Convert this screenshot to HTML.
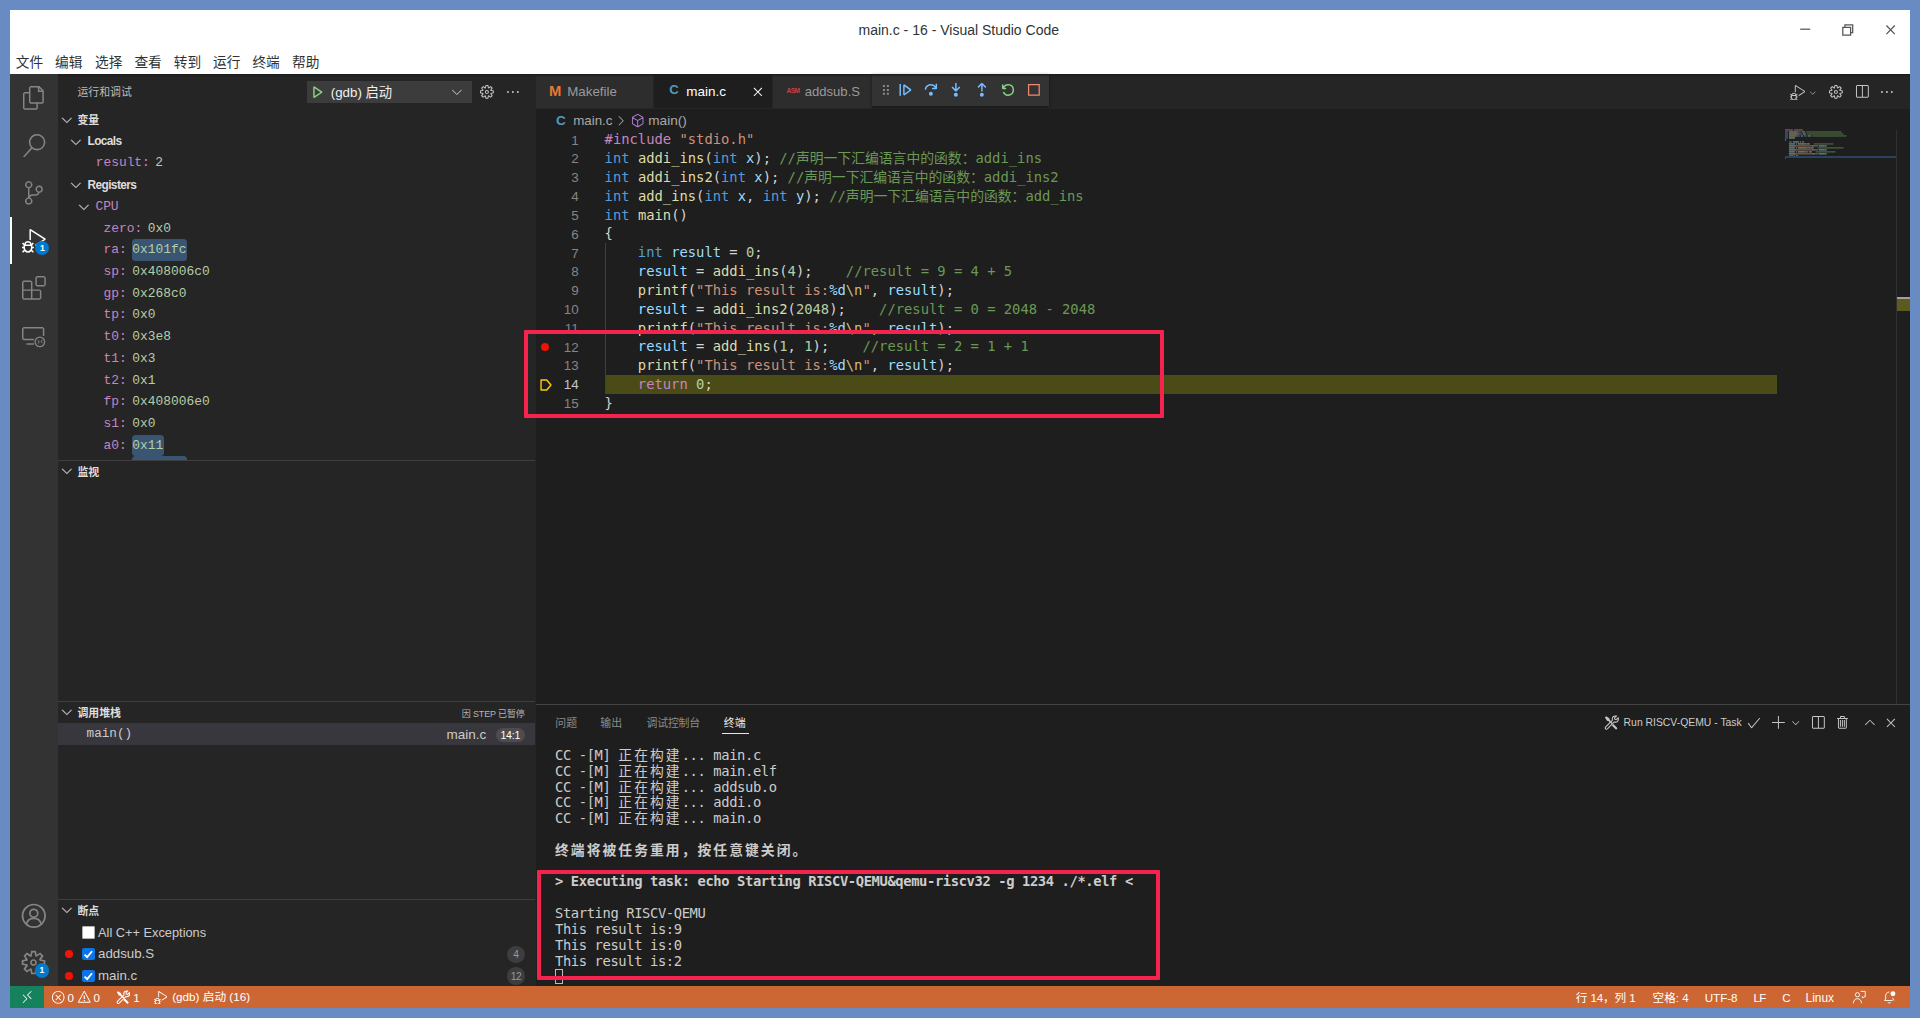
<!DOCTYPE html>
<html lang="zh-CN">
<head>
<meta charset="utf-8">
<title>main.c - 16 - Visual Studio Code</title>
<style>
html,body{margin:0;padding:0;}
body{width:1920px;height:1018px;overflow:hidden;background:#698bc4;position:relative;font-family:"Liberation Sans","Noto Sans CJK SC",sans-serif;-webkit-font-smoothing:antialiased;}
#app{position:absolute;left:0;top:0;width:1920px;height:1018px;overflow:hidden;}
#app div,#app span.t,#app svg.i{position:absolute;}
#app div.clip{overflow:hidden;}
span.t{white-space:pre;display:block;}
span.code{font-family:"DejaVu Sans Mono","Liberation Mono","Noto Sans CJK SC",monospace;font-size:13.82px;line-height:18.82px;height:18.82px;color:#d4d4d4;letter-spacing:-0.000px;}
span.code span{letter-spacing:inherit;}
span.term{font-family:"DejaVu Sans Mono","Liberation Mono","Noto Sans CJK SC",monospace;font-size:13.8px;line-height:15.81px;height:15.81px;color:#cccccc;letter-spacing:-0.391px;}
span.term .w{letter-spacing:2.034px;}
</style>
</head>
<body>
<div id="app">
<!-- title bar -->
<div style="left:10px;top:10px;width:1900px;height:998px;background:#252526;"></div>
<div style="left:10px;top:10px;width:1900px;height:64.2px;background:#ffffff;"></div>
<span class="t" style="top:20px;line-height:21px;height:21px;font-size:14px;color:#2e3436;left:858.5px;">main.c - 16 - Visual Studio Code</span>
<svg class="i" style="left:1795px;top:18px" width="110" height="24" viewBox="0 0 110 24" fill="none" stroke="#555555" stroke-width="1.25"><path d="M5.2 11.2H15.2"/><path d="M47.8 9.3h7.8v7.800h-7.800z"/><path d="M49.900 9.200V6.900h7.800v7.800h-2.200"/><path d="M91.4 7.5l8.4 8.6M99.800 7.500l-8.400 8.600"/></svg>
<span class="t" style="top:52px;line-height:21px;height:21px;font-size:13.7px;color:#2e3436;left:15.7px;">文件</span>
<span class="t" style="top:52px;line-height:21px;height:21px;font-size:13.7px;color:#2e3436;left:55px;">编辑</span>
<span class="t" style="top:52px;line-height:21px;height:21px;font-size:13.7px;color:#2e3436;left:95px;">选择</span>
<span class="t" style="top:52px;line-height:21px;height:21px;font-size:13.7px;color:#2e3436;left:134.4px;">查看</span>
<span class="t" style="top:52px;line-height:21px;height:21px;font-size:13.7px;color:#2e3436;left:173.7px;">转到</span>
<span class="t" style="top:52px;line-height:21px;height:21px;font-size:13.7px;color:#2e3436;left:213px;">运行</span>
<span class="t" style="top:52px;line-height:21px;height:21px;font-size:13.7px;color:#2e3436;left:252.4px;">终端</span>
<span class="t" style="top:52px;line-height:21px;height:21px;font-size:13.7px;color:#2e3436;left:292px;">帮助</span>
<!-- activity bar -->
<div style="left:10px;top:74.2px;width:47.6px;height:911.8px;background:#333333;"></div>
<svg class="i" style="left:21.9px;top:86.07px;" width="23.8" height="23.8" viewBox="0 0 24 24" fill="#858585"><path d="M17.5 0h-9L7 1.5V6H2.5L1 7.5v15.07L2.5 24h12.07L16 22.57V18h4.7l1.3-1.43V4.5L17.5 0zm0 2.12l2.38 2.38H17.5V2.12zm-3 20.38h-12v-15H7v9.07L8.5 18h6v4.5zm6-6h-12v-15H16V6h4.5v10.5z"/></svg>
<svg class="i" style="left:21.9px;top:133.62px;" width="23.8" height="23.8" viewBox="0 0 24 24" fill="#858585"><path d="M15.25 0a8.25 8.25 0 0 0-6.18 13.72L1 22.88l1.12 1 8.05-9.12A8.251 8.251 0 1 0 15.25.01V0zm0 15a6.75 6.75 0 1 1 0-13.5 6.75 6.75 0 0 1 0 13.5z"/></svg>
<svg class="i" style="left:21.9px;top:181.17px;" width="23.8" height="23.8" viewBox="0 0 24 24" fill="#858585"><path d="M21.007 8.222A3.738 3.738 0 0 0 15.045 5.2a3.737 3.737 0 0 0 1.156 6.583 2.988 2.988 0 0 1-2.668 1.67h-2.99a4.456 4.456 0 0 0-2.989 1.165V7.4a3.737 3.737 0 1 0-1.494 0v9.117a3.776 3.776 0 1 0 1.816.099 2.990 2.990 0 0 1 2.668-1.667h2.990a4.484 4.484 0 0 0 4.223-3.039 3.736 3.736 0 0 0 3.250-3.687zM4.565 3.738a2.242 2.242 0 1 1 4.484 0 2.242 2.242 0 0 1-4.484 0zm4.484 16.441a2.242 2.242 0 1 1-4.484 0 2.242 2.242 0 0 1 4.484 0zm8.221-9.715a2.242 2.242 0 1 1 0-4.485 2.242 2.242 0 0 1 0 4.485z"/></svg>
<svg class="i" style="left:21.9px;top:228.72px;" width="23.8" height="23.8" viewBox="0 0 24 24" fill="#ffffff"><path d="M10.94 13.5l-1.32 1.32a3.730 3.730 0 0 0-7.240 0L1.060 13.500 0 14.560l1.720 1.720-.220.220V18H0v1.500h1.500v.080c.077.489.214.966.410 1.420L0 22.940 1.060 24l1.650-1.650A4.308 4.308 0 0 0 6 24a4.310 4.310 0 0 0 3.290-1.650L10.940 24 12 22.940 10.090 21c.198-.464.336-.951.410-1.450v-.100H12V18h-1.500v-1.500l-.220-.220L12 14.560l-1.060-1.060zM6 13.500a2.250 2.250 0 0 1 2.250 2.250h-4.500A2.250 2.250 0 0 1 6 13.500zm3 6a3.330 3.330 0 0 1-3 3 3.330 3.330 0 0 1-3-3v-2.250h6v2.250zm14.760-9.900v1.260L13.500 17.370V15.600l8.500-5.370L9 2v9.460a5.070 5.070 0 0 0-1.500-.720V.630L8.640 0l15.120 9.600z"/></svg>
<svg class="i" style="left:21.9px;top:276.28px;" width="23.8" height="23.8" viewBox="0 0 24 24" fill="#858585"><path d="M13.5 1.5L15 0h7.5L24 1.5V9l-1.5 1.5H15L13.500 9V1.500zm1.500 0V9h7.500V1.500H15zM0 15V6l1.500-1.500H9L10.500 6v7.500H18l1.500 1.500v7.500L18 24H1.500L0 22.500V15zm9-1.500V6H1.500v7.500H9zM9 15H1.500v7.500H9V15zm1.500 7.500H18V15h-7.500v7.500z"/></svg>
<svg class="i" style="left:21.9px;top:323.82px;" width="23.8" height="23.8" viewBox="0 0 24 24" fill="#858585"><path fill-rule="evenodd" d="M1.5 3H21l1.5 1.500V12H21V4.500H1.500V15H12v1.500H1.500L0 15V4.500L1.500 3zM4.500 19.500H12V21H4.500v-1.500zM18 12.500a5.500 5.500 0 1 0 0 11 5.500 5.500 0 0 0 0-11zm0 9.700a4.200 4.200 0 1 1 0-8.400 4.200 4.200 0 0 1 0 8.400z"/><path d="M16.300 16.200l1.600 1.800-1.600 1.800-.600-.500 1.150-1.300-1.150-1.300zM20.300 15.700l-1.600 1.800 1.600 1.800.600-.500-1.150-1.300 1.150-1.300z"/></svg>
<div style="left:10px;top:216.85px;width:2px;height:47.55px;background:#ffffff;"></div>
<div style="left:35px;top:241px;width:14.4px;height:14.4px;background:#007acc;border-radius:50%;"></div>
<span class="t" style="top:242px;line-height:13px;height:13px;font-size:8.6px;color:#ffffff;left:39.9px;font-weight:700;">1</span>
<svg class="i" style="left:21px;top:902.6px;" width="25.6" height="25.6" viewBox="0 0 24 24" fill="#858585"><circle cx="12" cy="12" r="10.6" fill="none" stroke="#858585" stroke-width="1.6"/><circle cx="12" cy="9.6" r="3.700" fill="none" stroke="#858585" stroke-width="1.600"/><path d="M5.200 19.600c.700-3.300 3.300-5.200 6.800-5.200s6.100 1.900 6.800 5.200" fill="none" stroke="#858585" stroke-width="1.600"/></svg>
<svg class="i" style="left:20.3px;top:949.3px;" width="27" height="27" viewBox="0 0 16 16" fill="#858585"><path d="M9.1 4.4L8.6 2H7.4l-.5 2.4-.7.3-2-1.3-.9.8 1.3 2-.2.7-2.4.5v1.2l2.4.5.3.8-1.3 2 .8.8 2-1.3.8.3.4 2.3h1.2l.5-2.4.8-.3 2 1.3.8-.8-1.3-2 .3-.8 2.3-.4V7.4l-2.4-.5-.3-.8 1.3-2-.8-.8-2 1.3-.7-.2zM9.4 1l.5 2.4L12 2.1l2 2-1.4 2.1 2.4.4v2.8l-2.4.5L14 12l-2 2-2.1-1.4-.5 2.4H6.6l-.5-2.4L4 13.9l-2-2 1.4-2.1L1 9.4V6.6l2.4-.5L2.1 4l2-2 2.1 1.4.4-2.4h2.8zm.6 7c0 1.1-.9 2-2 2s-2-.9-2-2 .9-2 2-2 2 .9 2 2zM8 9c.6 0 1-.4 1-1s-.4-1-1-1-1 .4-1 1 .4 1 1 1z"/></svg>
<div style="left:34.5px;top:963.2px;width:14.4px;height:14.4px;background:#007acc;border-radius:50%;"></div>
<span class="t" style="top:964px;line-height:13px;height:13px;font-size:8.6px;color:#ffffff;left:39.4px;font-weight:700;">1</span>
<!-- side bar -->
<div style="left:57.6px;top:74.2px;width:477.9px;height:911.8px;background:#252526;"></div>
<span class="t" style="top:84px;line-height:16px;height:16px;font-size:10.9px;color:#bbbbbb;left:77.4px;">运行和调试</span>
<div style="left:307px;top:81.3px;width:165px;height:21.4px;background:#3c3c3c;"></div>
<svg class="i" style="left:308.7px;top:84.2px;" width="15.8" height="15.8" viewBox="0 0 16 16" fill="#89d185"><path d="M4.25 3l1.166-.624 8 5.333v1.248l-8 5.334-1.166-.624V3zm1.5 1.401v7.864l5.898-3.932L5.750 4.401z"/></svg>
<span class="t" style="top:83px;line-height:20px;height:20px;font-size:13.3px;color:#f0f0f0;left:330.8px;">(gdb) 启动</span>
<svg class="i" style="left:449.3px;top:84.4px;" width="15.8" height="15.8" viewBox="0 0 16 16" fill="#c5c5c5"><path d="M7.976 10.072l4.357-4.357.62.618L8.284 11h-.618L3 6.333l.619-.618 4.357 4.357z"/></svg>
<svg class="i" style="left:478.9px;top:84.1px;" width="15.8" height="15.8" viewBox="0 0 16 16" fill="#c5c5c5"><path d="M9.1 4.4L8.6 2H7.4l-.5 2.4-.7.3-2-1.3-.9.8 1.3 2-.2.7-2.4.5v1.2l2.4.5.3.8-1.3 2 .8.8 2-1.3.8.3.4 2.3h1.2l.5-2.4.8-.3 2 1.3.8-.8-1.3-2 .3-.8 2.3-.4V7.4l-2.4-.5-.3-.8 1.3-2-.8-.8-2 1.3-.7-.2zM9.4 1l.5 2.4L12 2.1l2 2-1.4 2.1 2.4.4v2.8l-2.4.5L14 12l-2 2-2.1-1.4-.5 2.4H6.6l-.5-2.4L4 13.9l-2-2 1.4-2.1L1 9.4V6.6l2.4-.5L2.1 4l2-2 2.1 1.4.4-2.4h2.8zm.6 7c0 1.1-.9 2-2 2s-2-.9-2-2 .9-2 2-2 2 .9 2 2zM8 9c.6 0 1-.4 1-1s-.4-1-1-1-1 .4-1 1 .4 1 1 1z"/></svg>
<svg class="i" style="left:504.9px;top:84.1px;" width="15.8" height="15.8" viewBox="0 0 16 16" fill="#c5c5c5"><path d="M4 8a1 1 0 1 1-2 0 1 1 0 0 1 2 0zm5 0a1 1 0 1 1-2 0 1 1 0 0 1 2 0zm5 0a1 1 0 1 1-2 0 1 1 0 0 1 2 0z"/></svg>
<div style="left:57.6px;top:74.2px;width:477.9px;height:3px;background:linear-gradient(#1b1b1c,#25252600);"></div>
<svg class="i" style="left:59.4px;top:111.98px;stroke:#c5c5c5;stroke-width:0.35px;" width="15.8" height="15.8" viewBox="0 0 16 16" fill="#c5c5c5"><path d="M7.976 10.072l4.357-4.357.62.618L8.284 11h-.618L3 6.333l.619-.618 4.357 4.357z"/></svg>
<span class="t" style="top:112px;line-height:16px;height:16px;font-size:10.9px;color:#dddddd;left:77.4px;font-weight:700;">变量</span>
<div class="clip" style="left:0;top:0;width:535.5px;height:460.2px"><svg class="i" style="left:68.4px;top:133.5px;stroke:#c5c5c5;stroke-width:0.35px;" width="15.8" height="15.8" viewBox="0 0 16 16" fill="#c5c5c5"><path d="M7.976 10.072l4.357-4.357.62.618L8.284 11h-.618L3 6.333l.619-.618 4.357 4.357z"/></svg>
<span class="t" style="top:132px;line-height:18px;height:18px;font-size:11.9px;color:#dddddd;left:87.5px;font-weight:700;letter-spacing:-0.6px;">Locals</span>
<span class="t" style="top:153px;line-height:19px;height:19px;font-size:12.9px;color:#b5cea8;left:95.7px;font-family:'Liberation Mono','Noto Sans CJK SC',monospace;"><span style="color:#c586c0">result:</span><span style="color:#b5cea8;margin-left:5.5px">2</span></span>
<svg class="i" style="left:68.4px;top:176.92px;stroke:#c5c5c5;stroke-width:0.35px;" width="15.8" height="15.8" viewBox="0 0 16 16" fill="#c5c5c5"><path d="M7.976 10.072l4.357-4.357.62.618L8.284 11h-.618L3 6.333l.619-.618 4.357 4.357z"/></svg>
<span class="t" style="top:176px;line-height:18px;height:18px;font-size:11.9px;color:#dddddd;left:87.5px;font-weight:700;letter-spacing:-0.6px;">Registers</span>
<svg class="i" style="left:76.3px;top:198.63px;stroke:#c5c5c5;stroke-width:0.35px;" width="15.8" height="15.8" viewBox="0 0 16 16" fill="#c5c5c5"><path d="M7.976 10.072l4.357-4.357.62.618L8.284 11h-.618L3 6.333l.619-.618 4.357 4.357z"/></svg>
<span class="t" style="top:197px;line-height:19px;height:19px;font-size:12.9px;color:#c586c0;left:95.4px;font-family:'Liberation Mono','Noto Sans CJK SC',monospace;">CPU</span>
<span class="t" style="top:219px;line-height:19px;height:19px;font-size:12.9px;color:#b5cea8;left:103.6px;font-family:'Liberation Mono','Noto Sans CJK SC',monospace;"><span style="color:#c586c0">zero:</span><span style="color:#b5cea8;margin-left:5.5px">0x0</span></span>
<div style="left:131.82px;top:239.37px;width:55.19px;height:21.47px;background:#3a5572;border-radius:3.5px;"></div>
<span class="t" style="top:240px;line-height:19px;height:19px;font-size:12.9px;color:#b5cea8;left:103.6px;font-family:'Liberation Mono','Noto Sans CJK SC',monospace;"><span style="color:#c586c0">ra:</span><span style="color:#b5cea8;margin-left:5.5px">0x101fc</span></span>
<span class="t" style="top:262px;line-height:19px;height:19px;font-size:12.9px;color:#b5cea8;left:103.6px;font-family:'Liberation Mono','Noto Sans CJK SC',monospace;"><span style="color:#c586c0">sp:</span><span style="color:#b5cea8;margin-left:5.5px">0x408006c0</span></span>
<span class="t" style="top:284px;line-height:19px;height:19px;font-size:12.9px;color:#b5cea8;left:103.6px;font-family:'Liberation Mono','Noto Sans CJK SC',monospace;"><span style="color:#c586c0">gp:</span><span style="color:#b5cea8;margin-left:5.5px">0x268c0</span></span>
<span class="t" style="top:305px;line-height:19px;height:19px;font-size:12.9px;color:#b5cea8;left:103.6px;font-family:'Liberation Mono','Noto Sans CJK SC',monospace;"><span style="color:#c586c0">tp:</span><span style="color:#b5cea8;margin-left:5.5px">0x0</span></span>
<span class="t" style="top:327px;line-height:19px;height:19px;font-size:12.9px;color:#b5cea8;left:103.6px;font-family:'Liberation Mono','Noto Sans CJK SC',monospace;"><span style="color:#c586c0">t0:</span><span style="color:#b5cea8;margin-left:5.5px">0x3e8</span></span>
<span class="t" style="top:349px;line-height:19px;height:19px;font-size:12.9px;color:#b5cea8;left:103.6px;font-family:'Liberation Mono','Noto Sans CJK SC',monospace;"><span style="color:#c586c0">t1:</span><span style="color:#b5cea8;margin-left:5.5px">0x3</span></span>
<span class="t" style="top:371px;line-height:19px;height:19px;font-size:12.9px;color:#b5cea8;left:103.6px;font-family:'Liberation Mono','Noto Sans CJK SC',monospace;"><span style="color:#c586c0">t2:</span><span style="color:#b5cea8;margin-left:5.5px">0x1</span></span>
<span class="t" style="top:392px;line-height:19px;height:19px;font-size:12.9px;color:#b5cea8;left:103.6px;font-family:'Liberation Mono','Noto Sans CJK SC',monospace;"><span style="color:#c586c0">fp:</span><span style="color:#b5cea8;margin-left:5.5px">0x408006e0</span></span>
<span class="t" style="top:414px;line-height:19px;height:19px;font-size:12.9px;color:#b5cea8;left:103.6px;font-family:'Liberation Mono','Noto Sans CJK SC',monospace;"><span style="color:#c586c0">s1:</span><span style="color:#b5cea8;margin-left:5.5px">0x0</span></span>
<div style="left:131.82px;top:434.76px;width:31.97px;height:21.47px;background:#3a5572;border-radius:3.5px;"></div>
<span class="t" style="top:436px;line-height:19px;height:19px;font-size:12.9px;color:#b5cea8;left:103.6px;font-family:'Liberation Mono','Noto Sans CJK SC',monospace;"><span style="color:#c586c0">a0:</span><span style="color:#b5cea8;margin-left:5.5px">0x11</span></span>
<div style="left:131.82px;top:456.47px;width:55.19px;height:21.47px;background:#3a5572;border-radius:3.5px;"></div>
<span class="t" style="top:457px;line-height:19px;height:19px;font-size:12.9px;color:#b5cea8;left:103.6px;font-family:'Liberation Mono','Noto Sans CJK SC',monospace;"><span style="color:#c586c0">a1:</span><span style="color:#b5cea8;margin-left:5.5px">0x11a10</span></span></div>
<div style="left:57.6px;top:460.2px;width:477.9px;height:1px;background:#3f3f41;"></div>
<svg class="i" style="left:59.4px;top:463.49px;stroke:#c5c5c5;stroke-width:0.35px;" width="15.8" height="15.8" viewBox="0 0 16 16" fill="#c5c5c5"><path d="M7.976 10.072l4.357-4.357.62.618L8.284 11h-.618L3 6.333l.619-.618 4.357 4.357z"/></svg>
<span class="t" style="top:464px;line-height:16px;height:16px;font-size:10.9px;color:#dddddd;left:77.4px;font-weight:700;">监视</span>
<div style="left:57.6px;top:701px;width:477.9px;height:1px;background:#3f3f41;"></div>
<svg class="i" style="left:59.4px;top:704.28px;stroke:#c5c5c5;stroke-width:0.35px;" width="15.8" height="15.8" viewBox="0 0 16 16" fill="#c5c5c5"><path d="M7.976 10.072l4.357-4.357.62.618L8.284 11h-.618L3 6.333l.619-.618 4.357 4.357z"/></svg>
<span class="t" style="top:705px;line-height:16px;height:16px;font-size:10.9px;color:#dddddd;left:77.4px;font-weight:700;">调用堆栈</span>
<span class="t" style="top:707px;line-height:14px;height:14px;font-size:9px;color:#b4b4b4;right:1395.4px;letter-spacing:-0.15px;">因 STEP 已暂停</span>
<div style="left:57.6px;top:723.2px;width:477.9px;height:21.7px;background:#37373d;"></div>
<span class="t" style="top:724px;line-height:19px;height:19px;font-size:12.65px;color:#cccccc;left:86.6px;font-family:'Liberation Mono','Noto Sans CJK SC',monospace;">main()</span>
<span class="t" style="top:725px;line-height:20px;height:20px;font-size:13.5px;color:#cccccc;right:1433.8px;">main.c</span>
<div style="left:495.5px;top:727.6px;width:29.7px;height:14.6px;background:#4d4d4d;border-radius:7.3px;"></div>
<span class="t" style="top:727px;line-height:16px;height:16px;font-size:10.6px;color:#ffffff;left:510.3px;letter-spacing:-0.2px;transform:translateX(-50%);">14:1</span>
<div style="left:57.6px;top:899px;width:477.9px;height:1px;background:#3f3f41;"></div>
<svg class="i" style="left:59.4px;top:902.28px;stroke:#c5c5c5;stroke-width:0.35px;" width="15.8" height="15.8" viewBox="0 0 16 16" fill="#c5c5c5"><path d="M7.976 10.072l4.357-4.357.62.618L8.284 11h-.618L3 6.333l.619-.618 4.357 4.357z"/></svg>
<span class="t" style="top:903px;line-height:16px;height:16px;font-size:10.9px;color:#dddddd;left:77.4px;font-weight:700;">断点</span>
<div style="left:82.2px;top:925.99px;width:12.7px;height:12.7px;background:#ffffff;border-radius:2px;box-shadow:inset 0 0 0 0.8px #9a9a9a;"></div>
<span class="t" style="top:923px;line-height:19px;height:19px;font-size:12.8px;color:#cccccc;left:98px;">All C++ Exceptions</span>
<div style="left:65px;top:950.36px;width:7.6px;height:7.6px;background:#f01408;border-radius:50%;"></div>
<div style="left:82.2px;top:947.75px;width:12.7px;height:12.7px;background:#0a74e8;border-radius:2px;"></div><svg class="i" style="left:82.2px;top:947.75px" width="12.7" height="12.7" viewBox="0 0 13 13" fill="none" stroke="#fff" stroke-width="1.9"><path d="M2.600 6.700l2.700 2.700 5-6.100"/></svg>
<span class="t" style="top:944px;line-height:20px;height:20px;font-size:13.3px;color:#cccccc;left:98px;">addsub.S</span>
<div style="left:507.4px;top:945.55px;width:17.2px;height:17.2px;background:#3d3d3f;border-radius:50%;"></div>
<span class="t" style="top:947px;line-height:15px;height:15px;font-size:10.2px;color:#9a9a9a;left:516px;letter-spacing:-0.3px;transform:translateX(-50%);">4</span>
<div style="left:65px;top:972.12px;width:7.6px;height:7.6px;background:#f01408;border-radius:50%;"></div>
<div style="left:82.2px;top:969.52px;width:12.7px;height:12.7px;background:#0a74e8;border-radius:2px;"></div><svg class="i" style="left:82.2px;top:969.52px" width="12.7" height="12.7" viewBox="0 0 13 13" fill="none" stroke="#fff" stroke-width="1.9"><path d="M2.600 6.700l2.700 2.700 5-6.100"/></svg>
<span class="t" style="top:966px;line-height:20px;height:20px;font-size:13.3px;color:#cccccc;left:98px;">main.c</span>
<div style="left:507.4px;top:967.32px;width:17.2px;height:17.2px;background:#3d3d3f;border-radius:50%;"></div>
<span class="t" style="top:969px;line-height:15px;height:15px;font-size:10.2px;color:#9a9a9a;left:516px;letter-spacing:-0.3px;transform:translateX(-50%);">12</span>
<!-- editor -->
<div style="left:535.5px;top:108.5px;width:1374.5px;height:596px;background:#1e1e1e;"></div>
<div style="left:604.6px;top:374.96px;width:1172.9px;height:18.82px;background:#4b4b18;"></div>
<div style="left:605.3px;top:243.22px;width:1px;height:150.56px;background:#404040;"></div>
<span class="t" style="top:131px;line-height:19px;height:19px;font-size:13.4px;color:#858585;right:1341.4px;">1</span>
<span class="t code" style="left:604.6px;top:130.3px"><span style="color:#c586c0">#include</span> <span style="color:#ce9178">"stdio.h"</span></span>
<span class="t" style="top:149px;line-height:19px;height:19px;font-size:13.4px;color:#858585;right:1341.4px;">2</span>
<span class="t code" style="left:604.6px;top:149.12px"><span style="color:#569cd6">int</span> <span style="color:#dcdcaa">addi_ins</span>(<span style="color:#569cd6">int</span> <span style="color:#9cdcfe">x</span>); <span style="color:#6a9955">//声明一下汇编语言中的函数：addi_ins</span></span>
<span class="t" style="top:168px;line-height:19px;height:19px;font-size:13.4px;color:#858585;right:1341.4px;">3</span>
<span class="t code" style="left:604.6px;top:167.94px"><span style="color:#569cd6">int</span> <span style="color:#dcdcaa">addi_ins2</span>(<span style="color:#569cd6">int</span> <span style="color:#9cdcfe">x</span>); <span style="color:#6a9955">//声明一下汇编语言中的函数：addi_ins2</span></span>
<span class="t" style="top:187px;line-height:19px;height:19px;font-size:13.4px;color:#858585;right:1341.4px;">4</span>
<span class="t code" style="left:604.6px;top:186.76px"><span style="color:#569cd6">int</span> <span style="color:#dcdcaa">add_ins</span>(<span style="color:#569cd6">int</span> <span style="color:#9cdcfe">x</span>, <span style="color:#569cd6">int</span> <span style="color:#9cdcfe">y</span>); <span style="color:#6a9955">//声明一下汇编语言中的函数：add_ins</span></span>
<span class="t" style="top:206px;line-height:19px;height:19px;font-size:13.4px;color:#858585;right:1341.4px;">5</span>
<span class="t code" style="left:604.6px;top:205.58px"><span style="color:#569cd6">int</span> <span style="color:#dcdcaa">main</span>()</span>
<span class="t" style="top:225px;line-height:19px;height:19px;font-size:13.4px;color:#858585;right:1341.4px;">6</span>
<span class="t code" style="left:604.6px;top:224.4px">{</span>
<span class="t" style="top:244px;line-height:19px;height:19px;font-size:13.4px;color:#858585;right:1341.4px;">7</span>
<span class="t code" style="left:604.6px;top:243.22px">    <span style="color:#569cd6">int</span> <span style="color:#9cdcfe">result</span> = <span style="color:#b5cea8">0</span>;</span>
<span class="t" style="top:262px;line-height:19px;height:19px;font-size:13.4px;color:#858585;right:1341.4px;">8</span>
<span class="t code" style="left:604.6px;top:262.04px">    <span style="color:#9cdcfe">result</span> = <span style="color:#dcdcaa">addi_ins</span>(<span style="color:#b5cea8">4</span>);    <span style="color:#6a9955">//result = 9 = 4 + 5</span></span>
<span class="t" style="top:281px;line-height:19px;height:19px;font-size:13.4px;color:#858585;right:1341.4px;">9</span>
<span class="t code" style="left:604.6px;top:280.86px">    <span style="color:#dcdcaa">printf</span>(<span style="color:#ce9178">"This result is:</span><span style="color:#9cdcfe">%d</span><span style="color:#d7ba7d">\n</span><span style="color:#ce9178">"</span>, <span style="color:#9cdcfe">result</span>);</span>
<span class="t" style="top:300px;line-height:19px;height:19px;font-size:13.4px;color:#858585;right:1341.4px;">10</span>
<span class="t code" style="left:604.6px;top:299.68px">    <span style="color:#9cdcfe">result</span> = <span style="color:#dcdcaa">addi_ins2</span>(<span style="color:#b5cea8">2048</span>);    <span style="color:#6a9955">//result = 0 = 2048 - 2048</span></span>
<span class="t" style="top:319px;line-height:19px;height:19px;font-size:13.4px;color:#858585;right:1341.4px;">11</span>
<span class="t code" style="left:604.6px;top:318.5px">    <span style="color:#dcdcaa">printf</span>(<span style="color:#ce9178">"This result is:</span><span style="color:#9cdcfe">%d</span><span style="color:#d7ba7d">\n</span><span style="color:#ce9178">"</span>, <span style="color:#9cdcfe">result</span>);</span>
<span class="t" style="top:338px;line-height:19px;height:19px;font-size:13.4px;color:#858585;right:1341.4px;">12</span>
<span class="t code" style="left:604.6px;top:337.32px">    <span style="color:#9cdcfe">result</span> = <span style="color:#dcdcaa">add_ins</span>(<span style="color:#b5cea8">1</span>, <span style="color:#b5cea8">1</span>);    <span style="color:#6a9955">//result = 2 = 1 + 1</span></span>
<span class="t" style="top:356px;line-height:19px;height:19px;font-size:13.4px;color:#858585;right:1341.4px;">13</span>
<span class="t code" style="left:604.6px;top:356.14px">    <span style="color:#dcdcaa">printf</span>(<span style="color:#ce9178">"This result is:</span><span style="color:#9cdcfe">%d</span><span style="color:#d7ba7d">\n</span><span style="color:#ce9178">"</span>, <span style="color:#9cdcfe">result</span>);</span>
<span class="t" style="top:375px;line-height:19px;height:19px;font-size:13.4px;color:#c6c6c6;right:1341.4px;">14</span>
<span class="t code" style="left:604.6px;top:374.96px">    <span style="color:#c586c0">return</span> <span style="color:#b5cea8">0</span>;</span>
<span class="t" style="top:394px;line-height:19px;height:19px;font-size:13.4px;color:#858585;right:1341.4px;">15</span>
<span class="t code" style="left:604.6px;top:393.78px">}</span>
<div style="left:541.1px;top:343.43px;width:8px;height:8px;background:#f01005;border-radius:50%;"></div>
<svg class="i" style="left:538.6px;top:377.67px" width="14" height="14" viewBox="0 0 15 15" fill="none" stroke="#ffcc00" stroke-width="1.5" stroke-linejoin="round"><path d="M2.200 2.100h6.100l4.500 5.400-4.500 5.400H2.200z"/></svg>
<svg class="i" style="left:1785px;top:129.4px;opacity:.48" width="112" height="31" viewBox="0 0 112 31"><rect x="0" y="0.25" width="7.92" height="1.5" fill="#c586c0"/><rect x="8.91" y="0.25" width="8.91" height="1.5" fill="#ce9178"/><rect x="0" y="2.24" width="2.97" height="1.5" fill="#569cd6"/><rect x="3.96" y="2.24" width="7.92" height="1.5" fill="#dcdcaa"/><rect x="11.88" y="2.24" width="0.99" height="1.5" fill="#d4d4d4"/><rect x="12.87" y="2.24" width="2.97" height="1.5" fill="#569cd6"/><rect x="16.83" y="2.24" width="0.99" height="1.5" fill="#9cdcfe"/><rect x="17.82" y="2.24" width="1.98" height="1.5" fill="#d4d4d4"/><rect x="20.79" y="2.24" width="35.64" height="1.5" fill="#6a9955"/><rect x="0" y="4.22" width="2.97" height="1.5" fill="#569cd6"/><rect x="3.96" y="4.22" width="8.91" height="1.5" fill="#dcdcaa"/><rect x="12.87" y="4.22" width="0.99" height="1.5" fill="#d4d4d4"/><rect x="13.86" y="4.22" width="2.97" height="1.5" fill="#569cd6"/><rect x="17.82" y="4.22" width="0.99" height="1.5" fill="#9cdcfe"/><rect x="18.81" y="4.22" width="1.98" height="1.5" fill="#d4d4d4"/><rect x="21.78" y="4.22" width="36.63" height="1.5" fill="#6a9955"/><rect x="0" y="6.21" width="2.97" height="1.5" fill="#569cd6"/><rect x="3.96" y="6.21" width="6.93" height="1.5" fill="#dcdcaa"/><rect x="10.89" y="6.21" width="0.99" height="1.5" fill="#d4d4d4"/><rect x="11.88" y="6.21" width="2.97" height="1.5" fill="#569cd6"/><rect x="15.84" y="6.21" width="0.99" height="1.5" fill="#9cdcfe"/><rect x="16.83" y="6.21" width="0.99" height="1.5" fill="#d4d4d4"/><rect x="18.81" y="6.21" width="2.97" height="1.5" fill="#569cd6"/><rect x="22.77" y="6.21" width="0.99" height="1.5" fill="#9cdcfe"/><rect x="23.76" y="6.21" width="1.98" height="1.5" fill="#d4d4d4"/><rect x="26.73" y="6.21" width="34.65" height="1.5" fill="#6a9955"/><rect x="0" y="8.19" width="2.97" height="1.5" fill="#569cd6"/><rect x="3.96" y="8.19" width="3.96" height="1.5" fill="#dcdcaa"/><rect x="7.92" y="8.19" width="1.98" height="1.5" fill="#d4d4d4"/><rect x="0" y="10.18" width="0.99" height="1.5" fill="#d4d4d4"/><rect x="3.96" y="12.16" width="2.97" height="1.5" fill="#569cd6"/><rect x="7.92" y="12.16" width="5.94" height="1.5" fill="#9cdcfe"/><rect x="14.85" y="12.16" width="0.99" height="1.5" fill="#d4d4d4"/><rect x="16.83" y="12.16" width="0.99" height="1.5" fill="#b5cea8"/><rect x="17.82" y="12.16" width="0.99" height="1.5" fill="#d4d4d4"/><rect x="3.96" y="14.15" width="5.94" height="1.5" fill="#9cdcfe"/><rect x="10.89" y="14.15" width="0.99" height="1.5" fill="#d4d4d4"/><rect x="12.87" y="14.15" width="7.92" height="1.5" fill="#dcdcaa"/><rect x="20.79" y="14.15" width="0.99" height="1.5" fill="#d4d4d4"/><rect x="21.78" y="14.15" width="0.99" height="1.5" fill="#b5cea8"/><rect x="22.77" y="14.15" width="1.98" height="1.5" fill="#d4d4d4"/><rect x="28.71" y="14.15" width="19.8" height="1.5" fill="#6a9955"/><rect x="3.96" y="16.13" width="5.94" height="1.5" fill="#dcdcaa"/><rect x="9.9" y="16.13" width="0.99" height="1.5" fill="#d4d4d4"/><rect x="10.89" y="16.13" width="15.84" height="1.5" fill="#ce9178"/><rect x="26.73" y="16.13" width="1.98" height="1.5" fill="#9cdcfe"/><rect x="28.71" y="16.13" width="1.98" height="1.5" fill="#d7ba7d"/><rect x="30.69" y="16.13" width="0.99" height="1.5" fill="#ce9178"/><rect x="31.68" y="16.13" width="0.99" height="1.5" fill="#d4d4d4"/><rect x="33.66" y="16.13" width="5.94" height="1.5" fill="#9cdcfe"/><rect x="39.6" y="16.13" width="1.98" height="1.5" fill="#d4d4d4"/><rect x="3.96" y="18.12" width="5.94" height="1.5" fill="#9cdcfe"/><rect x="10.89" y="18.12" width="0.99" height="1.5" fill="#d4d4d4"/><rect x="12.87" y="18.12" width="8.91" height="1.5" fill="#dcdcaa"/><rect x="21.78" y="18.12" width="0.99" height="1.5" fill="#d4d4d4"/><rect x="22.77" y="18.12" width="3.96" height="1.5" fill="#b5cea8"/><rect x="26.73" y="18.12" width="1.98" height="1.5" fill="#d4d4d4"/><rect x="32.67" y="18.12" width="25.74" height="1.5" fill="#6a9955"/><rect x="3.96" y="20.1" width="5.94" height="1.5" fill="#dcdcaa"/><rect x="9.9" y="20.1" width="0.99" height="1.5" fill="#d4d4d4"/><rect x="10.89" y="20.1" width="15.84" height="1.5" fill="#ce9178"/><rect x="26.73" y="20.1" width="1.98" height="1.5" fill="#9cdcfe"/><rect x="28.71" y="20.1" width="1.98" height="1.5" fill="#d7ba7d"/><rect x="30.69" y="20.1" width="0.99" height="1.5" fill="#ce9178"/><rect x="31.68" y="20.1" width="0.99" height="1.5" fill="#d4d4d4"/><rect x="33.66" y="20.1" width="5.94" height="1.5" fill="#9cdcfe"/><rect x="39.6" y="20.1" width="1.98" height="1.5" fill="#d4d4d4"/><rect x="3.96" y="22.09" width="5.94" height="1.5" fill="#9cdcfe"/><rect x="10.89" y="22.09" width="0.99" height="1.5" fill="#d4d4d4"/><rect x="12.87" y="22.09" width="6.93" height="1.5" fill="#dcdcaa"/><rect x="19.8" y="22.09" width="0.99" height="1.5" fill="#d4d4d4"/><rect x="20.79" y="22.09" width="0.99" height="1.5" fill="#b5cea8"/><rect x="21.78" y="22.09" width="0.99" height="1.5" fill="#d4d4d4"/><rect x="23.76" y="22.09" width="0.99" height="1.5" fill="#b5cea8"/><rect x="24.75" y="22.09" width="1.98" height="1.5" fill="#d4d4d4"/><rect x="30.69" y="22.09" width="19.8" height="1.5" fill="#6a9955"/><rect x="3.96" y="24.07" width="5.94" height="1.5" fill="#dcdcaa"/><rect x="9.9" y="24.07" width="0.99" height="1.5" fill="#d4d4d4"/><rect x="10.89" y="24.07" width="15.84" height="1.5" fill="#ce9178"/><rect x="26.73" y="24.07" width="1.98" height="1.5" fill="#9cdcfe"/><rect x="28.71" y="24.07" width="1.98" height="1.5" fill="#d7ba7d"/><rect x="30.69" y="24.07" width="0.99" height="1.5" fill="#ce9178"/><rect x="31.68" y="24.07" width="0.99" height="1.5" fill="#d4d4d4"/><rect x="33.66" y="24.07" width="5.94" height="1.5" fill="#9cdcfe"/><rect x="39.6" y="24.07" width="1.98" height="1.5" fill="#d4d4d4"/><rect x="3.96" y="26.05" width="5.94" height="1.5" fill="#c586c0"/><rect x="10.89" y="26.05" width="0.99" height="1.5" fill="#b5cea8"/><rect x="11.88" y="26.05" width="0.99" height="1.5" fill="#d4d4d4"/><rect x="0" y="28.04" width="0.99" height="1.5" fill="#d4d4d4"/></svg>
<div style="left:1785px;top:156px;width:111px;height:2.2px;background:#28435f;"></div>
<div style="left:1896px;top:130.3px;width:1px;height:574px;background:#303031;"></div>
<div style="left:1896.5px;top:297.4px;width:13.5px;height:13.3px;background:#5b5b1f;"></div>
<div style="left:1896.5px;top:297.2px;width:13.5px;height:1.9px;background:#a0a0a0;"></div>
<div style="left:535.5px;top:74.2px;width:1374.5px;height:34.3px;background:#252526;"></div>
<div style="left:535.5px;top:74.2px;width:118.2px;height:34.3px;background:#2d2d2d;"></div>
<span class="t" style="top:80px;line-height:22px;height:22px;font-size:14.8px;color:#e37933;left:548.9px;font-weight:700;">M</span>
<span class="t" style="top:82px;line-height:20px;height:20px;font-size:13.35px;color:#9a9a9a;left:567.2px;">Makefile</span>
<div style="left:653.7px;top:74.2px;width:118.2px;height:34.3px;background:#1e1e1e;"></div>
<span class="t" style="top:80px;line-height:20px;height:20px;font-size:13.2px;color:#519aba;left:669.3px;font-weight:700;">C</span>
<span class="t" style="top:82px;line-height:20px;height:20px;font-size:13.5px;color:#ffffff;left:686.3px;">main.c</span>
<svg class="i" style="left:750.3px;top:84.1px;" width="15.8" height="15.8" viewBox="0 0 16 16" fill="#ffffff"><path d="M8 8.707l3.646 3.647.708-.707L8.707 8l3.647-3.646-.707-.708L8 7.293 4.354 3.646l-.707.708L7.293 8l-3.646 3.646.707.708L8 8.707z"/></svg>
<div style="left:771.9px;top:74.2px;width:99.8px;height:34.3px;background:#2d2d2d;"></div>
<span class="t" style="top:86px;line-height:10px;height:10px;font-size:6.6px;color:#cc3e44;left:786.6px;font-weight:700;letter-spacing:-0.6px;">ASM</span>
<span class="t" style="top:82px;line-height:20px;height:20px;font-size:13.1px;color:#9a9a9a;left:804.7px;">addsub.S</span>
<div style="left:653.2px;top:74.2px;width:0.8px;height:34.3px;background:#252526;"></div>
<div style="left:771.5px;top:74.2px;width:0.8px;height:34.3px;background:#252526;"></div>
<div style="left:871.9px;top:74.2px;width:177.4px;height:31.4px;background:#333333;box-shadow:0 1px 3px rgba(0,0,0,0.45);"></div>
<svg class="i" style="left:877.7px;top:82.3px;" width="15.8" height="15.8" viewBox="0 0 16 16" fill="#8a8a8a"><path d="M5 3h2v2H5zm0 4h2v2H5zm0 4h2v2H5zm4-8h2v2H9zm0 4h2v2H9zm0 4h2v2H9z"/></svg>
<svg class="i" style="left:896.8px;top:82.3px;" width="15.8" height="15.8" viewBox="0 0 16 16" fill="#75beff"><path d="M2.5 2H4v12H2.5V2zm4.936.39L6.25 3v10l1.186.61 7-5V7.39l-7-5zM12.71 8l-4.96 3.543V4.457L12.71 8z"/></svg>
<svg class="i" style="left:922.7px;top:82.3px;" width="15.8" height="15.8" viewBox="0 0 16 16" fill="#75beff"><path d="M14.25 5.75v-4h-1.5v2.542c-1.145-1.359-2.911-2.209-4.84-2.209-3.177 0-5.92 2.307-6.16 5.398l-.02.269h1.501l.022-.226c.212-2.195 2.202-3.94 4.656-3.94 1.736 0 3.244.875 4.05 2.166h-2.83v1.5h4.2l.921-.5zM8 14a2 2 0 1 0 0-4 2 2 0 0 0 0 4z"/></svg>
<svg class="i" style="left:948.3px;top:82.3px;" width="15.8" height="15.8" viewBox="0 0 16 16" fill="#75beff"><path d="M8 9.532h.542l3.905-3.905-1.061-1.06-2.637 2.61V1H7.251v6.177l-2.637-2.61-1.061 1.06 3.905 3.905H8zm1.956 3.481a2 2 0 1 1-4 0 2 2 0 0 1 4 0z"/></svg>
<svg class="i" style="left:974.2px;top:82.3px;" width="15.8" height="15.8" viewBox="0 0 16 16" fill="#75beff"><path d="M8 1h-.542L3.553 4.905l1.061 1.06 2.637-2.61v6.177h1.498V3.355l2.637 2.61 1.061-1.06L8.542 1H8zm1.956 12.013a2 2 0 1 1-4 0 2 2 0 0 1 4 0z"/></svg>
<svg class="i" style="left:1000.1px;top:82.3px;" width="15.8" height="15.8" viewBox="0 0 16 16" fill="#89d185"><path d="M12.75 8a4.5 4.5 0 0 1-8.61 1.834l-1.391.565A6.001 6.001 0 0 0 14.25 8 6 6 0 0 0 3.5 4.334V2.5H2v4l.75.75h3.5v-1.500H4.352A4.5 4.5 0 0 1 12.75 8z"/></svg>
<svg class="i" style="left:1025.9px;top:82.3px;" width="15.8" height="15.8" viewBox="0 0 16 16" fill="#f48771"><path d="M2 2v12h12V2H2zm10.750 10.750h-9.500v-9.500h9.500v9.500z"/></svg>
<svg class="i" style="left:1789.7px;top:84.9px;" width="15.4" height="15.4" viewBox="0 0 24 24" fill="#c5c5c5"><path d="M10.94 13.5l-1.32 1.32a3.730 3.730 0 0 0-7.240 0L1.060 13.500 0 14.560l1.720 1.720-.220.220V18H0v1.500h1.500v.080c.077.489.214.966.410 1.420L0 22.940 1.060 24l1.650-1.650A4.308 4.308 0 0 0 6 24a4.310 4.310 0 0 0 3.290-1.650L10.940 24 12 22.940 10.090 21c.198-.464.336-.951.410-1.450v-.100H12V18h-1.500v-1.500l-.220-.220L12 14.560l-1.060-1.060zM6 13.500a2.250 2.250 0 0 1 2.250 2.250h-4.500A2.250 2.250 0 0 1 6 13.500zm3 6a3.330 3.330 0 0 1-3 3 3.330 3.330 0 0 1-3-3v-2.250h6v2.250zm14.760-9.900v1.260L13.500 17.370V15.600l8.500-5.370L9 2v9.460a5.070 5.070 0 0 0-1.500-.720V.630L8.640 0l15.120 9.600z"/></svg>
<svg class="i" style="left:1808.45px;top:87.65px;" width="9.5" height="9.5" viewBox="0 0 16 16" fill="#c5c5c5"><path d="M7.976 10.072l4.357-4.357.62.618L8.284 11h-.618L3 6.333l.619-.618 4.357 4.357z"/></svg>
<svg class="i" style="left:1828.2px;top:84px;" width="15.8" height="15.8" viewBox="0 0 16 16" fill="#c5c5c5"><path d="M9.1 4.4L8.6 2H7.4l-.5 2.4-.7.3-2-1.3-.9.8 1.3 2-.2.7-2.4.5v1.2l2.4.5.3.8-1.3 2 .8.8 2-1.3.8.3.4 2.3h1.2l.5-2.4.8-.3 2 1.3.8-.8-1.3-2 .3-.8 2.3-.4V7.4l-2.4-.5-.3-.8 1.3-2-.8-.8-2 1.3-.7-.2zM9.4 1l.5 2.4L12 2.1l2 2-1.4 2.1 2.4.4v2.8l-2.4.5L14 12l-2 2-2.1-1.4-.5 2.4H6.6l-.5-2.4L4 13.9l-2-2 1.4-2.1L1 9.4V6.6l2.4-.5L2.1 4l2-2 2.1 1.4.4-2.4h2.8zm.6 7c0 1.1-.9 2-2 2s-2-.9-2-2 .9-2 2-2 2 .9 2 2zM8 9c.6 0 1-.4 1-1s-.4-1-1-1-1 .4-1 1 .4 1 1 1z"/></svg>
<svg class="i" style="left:1854.4px;top:84px;" width="15.8" height="15.8" viewBox="0 0 16 16" fill="#c5c5c5"><path d="M14 1H3L2 2v11l1 1h11l1-1V2l-1-1zM8 13H3V2h5v11zm6 0H9V2h5v11z"/></svg>
<svg class="i" style="left:1879.4px;top:84px;" width="15.8" height="15.8" viewBox="0 0 16 16" fill="#c5c5c5"><path d="M4 8a1 1 0 1 1-2 0 1 1 0 0 1 2 0zm5 0a1 1 0 1 1-2 0 1 1 0 0 1 2 0zm5 0a1 1 0 1 1-2 0 1 1 0 0 1 2 0z"/></svg>
<div style="left:535.5px;top:74.2px;width:1374.5px;height:3px;background:linear-gradient(#1a1a1a,#1a1a1a00);"></div>
<span class="t" style="top:111px;line-height:20px;height:20px;font-size:13.6px;color:#519aba;left:556px;font-weight:700;">C</span>
<span class="t" style="top:111px;line-height:20px;height:20px;font-size:13.35px;color:#a9a9a9;left:573.2px;">main.c</span>
<svg class="i" style="left:613.3px;top:112.9px;" width="15.4" height="15.4" viewBox="0 0 16 16" fill="#a9a9a9"><path d="M10.072 8.024L5.715 3.667l.618-.62L11 7.716v.618L6.333 13l-.618-.619 4.357-4.357z"/></svg>
<svg class="i" style="left:629.8px;top:112.7px;" width="15.4" height="15.4" viewBox="0 0 16 16" fill="#b180d7"><path d="M13.51 4l-5-3h-1l-5 3-.49.86v6l.49.85 5 3h1l5-3 .49-.85v-6L13.510 4zm-6 9.560l-4.500-2.700V5.700l4.500 2.450v5.410zM3.270 4.700l4.740-2.840 4.740 2.840-4.740 2.590L3.270 4.700zm9.740 6.160l-4.500 2.700V8.150l4.500-2.450v5.160z"/></svg>
<span class="t" style="top:111px;line-height:20px;height:20px;font-size:13.6px;color:#a9a9a9;left:648.3px;">main()</span>
<!-- panel -->
<div style="left:535.5px;top:704.4px;width:1374.5px;height:281.6px;background:#1e1e1e;"></div>
<div style="left:535.5px;top:704.1px;width:1374.5px;height:1px;background:#434343;"></div>
<span class="t" style="top:715px;line-height:16px;height:16px;font-size:10.9px;color:#8c8c8c;left:555.3px;">问题</span>
<span class="t" style="top:715px;line-height:16px;height:16px;font-size:10.9px;color:#8c8c8c;left:600.3px;">输出</span>
<span class="t" style="top:715px;line-height:16px;height:16px;font-size:10.9px;color:#8c8c8c;left:646.5px;letter-spacing:-0.2px;">调试控制台</span>
<span class="t" style="top:715px;line-height:16px;height:16px;font-size:10.9px;color:#e7e7e7;left:723.8px;">终端</span>
<div style="left:722.3px;top:732.8px;width:26.3px;height:1px;background:#e7e7e7;"></div>
<svg class="i" style="left:1603.5px;top:715px;" width="15.4" height="15.4" viewBox="0 0 16 16" fill="#c5c5c5"><path d="M2.200 1.300l3.300 2.200.500 1.800 3 3-1.100 1.100-3-3-1.800-.500L1 2.600z"/><path d="M11.800 1c-1.800 0-3.200 1.400-3.200 3.200 0 .400.100.800.200 1.100L1.600 12.500a1.350 1.350 0 0 0 1.900 1.900l7.200-7.200c.300.100.700.200 1.100.200 1.800 0 3.200-1.400 3.200-3.200 0-.500-.100-.900-.300-1.300l-2 2-1.400-.400-.400-1.400 2-2c-.200-.100-.700-.100-1.100-.100z" fill="none" stroke="#c5c5c5" stroke-width="1.100"/><path d="M9.700 9.300l3.900 3.900a1.150 1.150 0 0 1-1.600 1.600L8.100 10.900z"/></svg>
<span class="t" style="top:715px;line-height:16px;height:16px;font-size:10.4px;color:#cccccc;left:1623.6px;">Run RISCV-QEMU - Task</span>
<svg class="i" style="left:1746.1px;top:714.8px;" width="15.8" height="15.8" viewBox="0 0 16 16" fill="#c5c5c5"><path d="M14.431 3.323l-8.47 10-.79-.036-3.35-4.77.818-.574 2.978 4.24 8.051-9.506.764.646z"/></svg>
<svg class="i" style="left:1771px;top:714.8px;" width="15.8" height="15.8" viewBox="0 0 16 16" fill="#c5c5c5"><path d="M14 7v1H8v6H7V8H1V7h6V1h1v6h6z"/></svg>
<svg class="i" style="left:1789.85px;top:717.25px;" width="11.5" height="11.5" viewBox="0 0 16 16" fill="#c5c5c5"><path d="M7.976 10.072l4.357-4.357.62.618L8.284 11h-.618L3 6.333l.619-.618 4.357 4.357z"/></svg>
<svg class="i" style="left:1810.3px;top:714.8px;" width="15.8" height="15.8" viewBox="0 0 16 16" fill="#c5c5c5"><path d="M14 1H3L2 2v11l1 1h11l1-1V2l-1-1zM8 13H3V2h5v11zm6 0H9V2h5v11z"/></svg>
<svg class="i" style="left:1835.4px;top:714.8px;" width="15.8" height="15.8" viewBox="0 0 16 16" fill="#c5c5c5"><path d="M10 3h3v1h-1v9l-1 1H4l-1-1V4H2V3h3V2a1 1 0 0 1 1-1h3a1 1 0 0 1 1 1v1zM9 2H6v1h3V2zM4 13h7V4H4v9zm2-8H5v7h1V5zm1 0h1v7H7V5zm2 0h1v7H9V5z"/></svg>
<svg class="i" style="left:1861.6px;top:715px;" width="15.8" height="15.8" viewBox="0 0 16 16" fill="#c5c5c5"><path d="M8.024 5.928l-4.357 4.357-.62-.618L7.716 5h.618L13 9.667l-.619.618-4.357-4.357z"/></svg>
<svg class="i" style="left:1883.1px;top:714.8px;" width="15.8" height="15.8" viewBox="0 0 16 16" fill="#c5c5c5"><path d="M8 8.707l3.646 3.647.708-.707L8.707 8l3.647-3.646-.707-.708L8 7.293 4.354 3.646l-.707.708L7.293 8l-3.646 3.646.707.708L8 8.707z"/></svg>
<span class="t term" style="left:555px;top:748px;">CC -[M] <span class="w">正在构建</span>... main.c</span>
<span class="t term" style="left:555px;top:763.8px;">CC -[M] <span class="w">正在构建</span>... main.elf</span>
<span class="t term" style="left:555px;top:779.62px;">CC -[M] <span class="w">正在构建</span>... addsub.o</span>
<span class="t term" style="left:555px;top:795.42px;">CC -[M] <span class="w">正在构建</span>... addi.o</span>
<span class="t term" style="left:555px;top:811.24px;">CC -[M] <span class="w">正在构建</span>... main.o</span>
<span class="t term" style="left:555px;top:842.86px;font-weight:700;"><span class="w">终端将被任务重用，按任意键关闭。</span></span>
<span class="t term" style="left:555px;top:874.48px;font-weight:700;">&gt; Executing task: echo Starting RISCV-QEMU&amp;qemu-riscv32 -g 1234 ./*.elf &lt;</span>
<span class="t term" style="left:555px;top:906.1px;">Starting RISCV-QEMU</span>
<span class="t term" style="left:555px;top:921.9px;">This result is:9</span>
<span class="t term" style="left:555px;top:937.72px;">This result is:0</span>
<span class="t term" style="left:555px;top:953.52px;">This result is:2</span>
<div style="left:555px;top:968.6px;width:8.2px;height:15.6px;background:transparent;border:1px solid #bdbdbd;box-sizing:border-box;"></div>
<!-- status bar -->
<div style="left:10px;top:986px;width:1900px;height:22px;background:#cc6633;"></div>
<div style="left:10px;top:986px;width:33.7px;height:22px;background:#16825d;"></div>
<svg class="i" style="left:19.7px;top:990px;" width="14.4" height="14.4" viewBox="0 0 16 16" fill="#ffffff"><path d="M12.904 9.57L8.928 5.596l3.976-3.976-.619-.62L8 5.286v.619l4.285 4.285.619-.62zM3 5.62l4.072 4.07L3 13.763l.619.618L8 10v-.619L3.619 5 3 5.620z"/></svg>
<svg class="i" style="left:50.7px;top:989.7px;" width="14.6" height="14.6" viewBox="0 0 16 16" fill="#ffffff"><path d="M8.6 1c1.6.1 3.1.9 4.200 2 1.300 1.400 2 3.100 2 5.100 0 1.600-.600 3.100-1.600 4.400-1 1.200-2.400 2.100-4 2.400-1.600.300-3.200.100-4.600-.700-1.400-.800-2.500-2-3.100-3.500C.9 9.200.8 7.500 1.300 6c.500-1.600 1.400-2.900 2.800-3.800C5.400 1.300 7 .9 8.600 1zm.500 12.900c1.300-.300 2.500-1 3.400-2.100.800-1.100 1.300-2.400 1.200-3.800 0-1.600-.600-3.200-1.700-4.300-1-1-2.200-1.600-3.600-1.700-1.300-.100-2.700.200-3.800 1-1.100.800-1.900 1.900-2.300 3.300-.400 1.300-.400 2.700.200 4 .600 1.300 1.500 2.300 2.700 3 1.200.700 2.600.900 3.900.600zM7.900 7.500L10.300 5l.700.700-2.400 2.500 2.400 2.500-.700.700-2.400-2.500-2.400 2.500-.700-.700 2.400-2.500-2.400-2.500.700-.700 2.400 2.500z"/></svg>
<span class="t" style="top:989px;line-height:17px;height:17px;font-size:11.6px;color:#ffffff;left:67.6px;">0</span>
<svg class="i" style="left:76.9px;top:989.5px;" width="14.6" height="14.6" viewBox="0 0 16 16" fill="#ffffff"><path d="M7.56 1h.88l6.54 12.26-.44.74H1.440L1 13.260 7.560 1zM8 2.280L2.280 13H13.700L8 2.280zM8.625 12v-1h-1.250v1h1.250zm-1.250-2V6h1.250v4h-1.250z"/></svg>
<span class="t" style="top:989px;line-height:17px;height:17px;font-size:11.6px;color:#ffffff;left:93.4px;">0</span>
<svg class="i" style="left:115.7px;top:989.7px;" width="14.6" height="14.6" viewBox="0 0 16 16" fill="#ffffff"><path d="M2.2 1.300l3.300 2.200.500 1.800 3 3-1.100 1.100-3-3-1.800-.500L1 2.600z"/><path d="M11.800 1c-1.800 0-3.200 1.400-3.200 3.200 0 .400.100.800.200 1.100L1.600 12.500a1.350 1.350 0 0 0 1.900 1.900l7.200-7.200c.300.100.700.200 1.100.200 1.800 0 3.200-1.400 3.200-3.200 0-.500-.100-.900-.300-1.300l-2 2-1.400-.400-.400-1.400 2-2c-.200-.100-.700-.100-1.100-.100z" fill="none" stroke="#fff" stroke-width="1.100"/><path d="M9.700 9.300l3.900 3.900a1.150 1.150 0 0 1-1.600 1.600L8.100 10.900z"/></svg>
<span class="t" style="top:989px;line-height:17px;height:17px;font-size:11.6px;color:#ffffff;left:133.2px;">1</span>
<svg class="i" style="left:153.9px;top:990.5px;" width="13.6" height="13.6" viewBox="0 0 24 24" fill="#ffffff"><path d="M10.94 13.5l-1.32 1.32a3.730 3.730 0 0 0-7.240 0L1.060 13.500 0 14.560l1.720 1.720-.220.220V18H0v1.500h1.500v.080c.077.489.214.966.410 1.420L0 22.940 1.060 24l1.650-1.650A4.308 4.308 0 0 0 6 24a4.310 4.310 0 0 0 3.290-1.650L10.940 24 12 22.940 10.090 21c.198-.464.336-.951.410-1.450v-.100H12V18h-1.500v-1.500l-.220-.220L12 14.560l-1.060-1.060zM6 13.500a2.250 2.250 0 0 1 2.250 2.250h-4.500A2.250 2.250 0 0 1 6 13.500zm3 6a3.330 3.330 0 0 1-3 3 3.330 3.330 0 0 1-3-3v-2.250h6v2.250zm14.760-9.900v1.260L13.500 17.370V15.600l8.500-5.370L9 2v9.460a5.070 5.070 0 0 0-1.500-.720V.630L8.640 0l15.120 9.600z"/></svg>
<span class="t" style="top:988px;line-height:18px;height:18px;font-size:11.7px;color:#ffffff;left:172.2px;">(gdb) 启动 (16)</span>
<span class="t" style="top:989px;line-height:17px;height:17px;font-size:11.6px;color:#ffffff;left:1575.8px;letter-spacing:-0.1px;">行 14，列 1</span>
<span class="t" style="top:989px;line-height:17px;height:17px;font-size:11.6px;color:#ffffff;left:1652.6px;">空格: 4</span>
<span class="t" style="top:989px;line-height:17px;height:17px;font-size:11.6px;color:#ffffff;left:1704.7px;">UTF-8</span>
<span class="t" style="top:989px;line-height:17px;height:17px;font-size:11.6px;color:#ffffff;left:1753.5px;letter-spacing:-0.6px;">LF</span>
<span class="t" style="top:989px;line-height:17px;height:17px;font-size:11.6px;color:#ffffff;left:1782.2px;">C</span>
<span class="t" style="top:989px;line-height:18px;height:18px;font-size:11.9px;color:#ffffff;left:1805.6px;">Linux</span>
<svg class="i" style="left:1851.5px;top:989.7px;" width="14.6" height="14.6" viewBox="0 0 16 16" fill="#ffffff"><path d="M9.500 1.500h5v6h-1.500l-1.300 1.400V7.500h-1.100" fill="none" stroke="#fff" stroke-width="1"/><circle cx="6" cy="5.200" r="2.300" fill="none" stroke="#fff" stroke-width="1"/><path d="M1.500 14.500c.400-3.400 2-5 4.500-5s4.100 1.600 4.500 5" fill="none" stroke="#fff" stroke-width="1"/></svg>
<svg class="i" style="left:1881.9px;top:989.7px;" width="14.6" height="14.6" viewBox="0 0 16 16" fill="#ffffff"><path d="M8 2.200c-2.400 0-4 1.800-4 4.200v3.400l-1.200 1.700h8.800M6.500 13.300c.300.700.800 1.100 1.500 1.100s1.200-.400 1.500-1.100M12 8.600v1.200l1.200 1.700" fill="none" stroke="#fff" stroke-width="1"/><circle cx="12" cy="4.200" r="2.700"/></svg>
<!-- annotations -->
<div style="left:524.2px;top:330.3px;width:640.1px;height:87.3px;border:4.7px solid #f7234f;box-sizing:border-box;border-radius:1px"></div>
<div style="left:537.4px;top:869.6px;width:622.3px;height:110.1px;border:4.7px solid #f7234f;box-sizing:border-box;border-radius:1px"></div>
</div>
</body>
</html>
